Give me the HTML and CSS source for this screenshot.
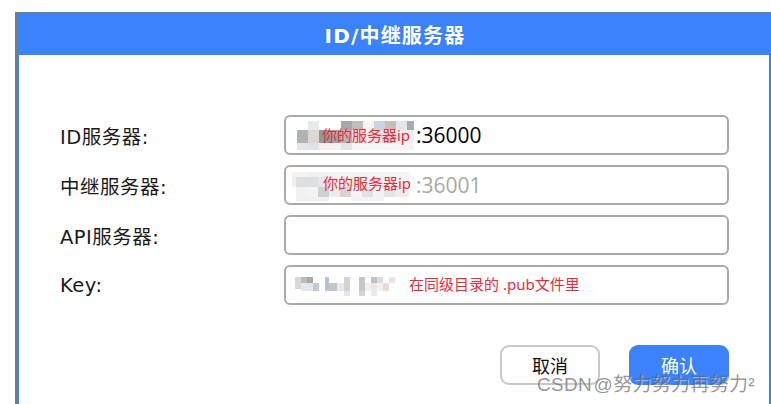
FILE: index.html
```html
<!DOCTYPE html>
<html>
	<head>
		<meta charset="utf-8">
		<title>ID/中继服务器</title>
		<link rel="stylesheet" href="styles.css">
	</head>
	<body>
		<div class="window">
			<div class="dialog">
				<div class="dialogTitle">ID/中继服务器</div>
				<div class="dialogBody">
					<div class="formRow">
						<label class="rowLabel">ID服务器:</label>
						<div class="field">
							<input class="fieldInput" type="text" value=":36000">
							<svg class="mosaic mosaicId" width="128" height="29" viewBox="0 0 128 29">
								<rect x="11" y="0" width="11" height="9" fill="#e8e9ec"/>
								<rect x="44" y="0" width="11" height="9" fill="#a5a7aa"/>
								<rect x="55" y="0" width="11" height="9" fill="#c0bcb8"/>
								<rect x="66" y="0" width="11" height="9" fill="#f5f4f2"/>
								<rect x="77" y="0" width="11" height="9" fill="#ccd3df"/>
								<rect x="88" y="0" width="11" height="9" fill="#c2bfbc"/>
								<rect x="99" y="0" width="11" height="9" fill="#e5e6e8"/>
								<rect x="110" y="0" width="7" height="9" fill="#a9abad"/>
								<rect x="0" y="9" width="11" height="13" fill="#b0b3b4"/>
								<rect x="11" y="9" width="11" height="13" fill="#dcd9d4"/>
								<rect x="22" y="9" width="11" height="13" fill="#959698"/>
								<rect x="33" y="9" width="11" height="13" fill="#a0a0a2"/>
								<rect x="44" y="9" width="11" height="13" fill="#b5b5b8"/>
								<rect x="55" y="9" width="11" height="13" fill="#e4e3e1"/>
								<rect x="66" y="9" width="11" height="13" fill="#f0efed"/>
								<rect x="77" y="9" width="11" height="13" fill="#e0e2e6"/>
								<rect x="88" y="9" width="11" height="13" fill="#dcd8d4"/>
								<rect x="99" y="9" width="18" height="13" fill="#f0f0f0"/>
								<rect x="0" y="22" width="11" height="7" fill="#e4e5e7"/>
								<rect x="11" y="22" width="11" height="7" fill="#dfe2e7"/>
								<rect x="22" y="22" width="22" height="7" fill="#f2f1ef"/>
								<rect x="44" y="22" width="11" height="7" fill="#e4e4e4"/>
								<rect x="55" y="22" width="62" height="7" fill="#f4f4f4"/>
							</svg>
							<span class="note noteId">你的服务器ip</span>
						</div>
					</div>
					<div class="formRow">
						<label class="rowLabel">中继服务器:</label>
						<div class="field">
							<input class="fieldInput" type="text" placeholder=":36001">
							<svg class="mosaic mosaicRelay" width="128" height="30" viewBox="0 0 128 30">
								<rect x="0" y="0" width="15" height="5" fill="#f6f3f1"/>
								<rect x="15" y="0" width="22" height="5" fill="#f0f0f0"/>
								<rect x="37" y="0" width="80" height="5" fill="#f5f5f5"/>
								<rect x="0" y="5" width="4" height="10" fill="#f0f0f0"/>
								<rect x="4" y="5" width="22" height="10" fill="#dedfe0"/>
								<rect x="26" y="5" width="11" height="10" fill="#e6e6e8"/>
								<rect x="37" y="5" width="22" height="10" fill="#f4f2f0"/>
								<rect x="59" y="5" width="11" height="10" fill="#e2e3e6"/>
								<rect x="70" y="5" width="47" height="10" fill="#f6f5f4"/>
								<rect x="4" y="15" width="11" height="10" fill="#f0f1f3"/>
								<rect x="15" y="15" width="11" height="10" fill="#f3f3f3"/>
								<rect x="26" y="15" width="11" height="10" fill="#cfd1d3"/>
								<rect x="37" y="15" width="11" height="10" fill="#ececec"/>
								<rect x="48" y="15" width="11" height="10" fill="#d8d4d0"/>
								<rect x="59" y="15" width="11" height="10" fill="#f5f5f5"/>
								<rect x="70" y="15" width="11" height="10" fill="#dfe2e5"/>
								<rect x="81" y="15" width="11" height="10" fill="#f4f4f4"/>
								<rect x="92" y="15" width="11" height="10" fill="#e2e3e6"/>
								<rect x="103" y="15" width="14" height="10" fill="#efedea"/>
								<rect x="4" y="25" width="33" height="4" fill="#f0f0f2"/>
								<rect x="59" y="25" width="33" height="4" fill="#f2f2f4"/>
							</svg>
							<span class="note noteRelay">你的服务器ip</span>
						</div>
					</div>
					<div class="formRow">
						<label class="rowLabel">API服务器:</label>
						<div class="field">
							<input class="fieldInput" type="text">
						</div>
					</div>
					<div class="formRow">
						<label class="rowLabel">Key:</label>
						<div class="field">
							<input class="fieldInput" type="text">
							<svg class="mosaic mosaicKey" width="100" height="24" viewBox="0 0 100 24">
								<rect x="0" y="2" width="6" height="12" fill="#d8d8da"/>
								<rect x="6" y="2" width="6" height="6" fill="#bcbcbc"/>
								<rect x="12" y="2" width="6" height="6" fill="#a8a8aa"/>
								<rect x="6" y="8" width="12" height="8" fill="#e4e6ec"/>
								<rect x="18" y="8" width="6" height="8" fill="#c4cbd6"/>
								<rect x="30" y="2" width="4" height="14" fill="#b9c2d0"/>
								<rect x="34" y="8" width="8" height="8" fill="#c2c5ca"/>
								<rect x="42" y="8" width="7" height="8" fill="#e2e9f0"/>
								<rect x="49" y="2" width="6" height="14" fill="#d6d2cc"/>
								<rect x="49" y="16" width="6" height="5" fill="#e4e6ec"/>
								<rect x="64" y="2" width="6" height="14" fill="#c6c7cb"/>
								<rect x="64" y="16" width="6" height="5" fill="#d4d5d8"/>
								<rect x="70" y="8" width="6" height="8" fill="#f3eee6"/>
								<rect x="76" y="2" width="6" height="6" fill="#c2c2c2"/>
								<rect x="82" y="2" width="6" height="6" fill="#dcdcdc"/>
								<rect x="76" y="8" width="6" height="13" fill="#e8e9ee"/>
								<rect x="82" y="8" width="6" height="8" fill="#f6f0ea"/>
								<rect x="88" y="8" width="6" height="8" fill="#e6ddd2"/>
								<rect x="94" y="2" width="6" height="6" fill="#e4e4e4"/>
							</svg>
							<span class="note noteKey">在同级目录的 .pub文件里</span>
						</div>
					</div>
					<div class="dialogButtons">
						<button class="btn btnCancel">取消</button>
						<button class="btn btnOk">确认</button>
					</div>
				</div>
			</div>
		</div>
		<div class="watermark">CSDN @努力努力再努力²</div>
	</body>
</html>
```

FILE: styles.css
```css
html, body {
	height: 100%;
}

body {
	display: flex;
	margin: 0;
	padding: 12px 0 0 15px;
	box-sizing: border-box;
	background-color: #fff;
	overflow: hidden;
	font-family: "Open Sans", "Noto Sans CJK SC", sans-serif;
}

.window {
	display: flex;
	flex: 1;
	min-width: 0;
	border-top: 1px solid #7a7a7a;
	border-left: 2px solid #7a7a7a;
}

.dialog {
	flex: 1;
	min-width: 0;
	border-left: 2px solid #3b82fb;
	border-right: 2px solid #3b82fb;
	background-color: #fff;
}

.dialogTitle {
	height: 42px;
	line-height: 46px;
	margin-left: -2px;
	padding-left: 4px;
	background-color: #3b82fb;
	color: #fff;
	font-family: "DejaVu Sans", "Noto Sans CJK SC", sans-serif;
	font-size: 20px;
	font-weight: bold;
	letter-spacing: 1.2px;
	text-align: center;
}

.dialogBody {
	padding: 60px 40px 0 41px;
}

.formRow {
	display: flex;
	align-items: center;
	height: 40px;
	margin-bottom: 10px;
}

.rowLabel {
	width: 224px;
	flex: none;
	font-family: "DejaVu Sans", "Noto Sans CJK SC", sans-serif;
	font-size: 19.5px;
	letter-spacing: 0.5px;
	color: #1a1a1a;
}

.field {
	position: relative;
	flex: 1;
	height: 40px;
}

.fieldInput {
	width: 100%;
	height: 40px;
	box-sizing: border-box;
	padding: 0 0 0 130px;
	border: 2px solid #a9a9ae;
	border-radius: 6px;
	background: transparent;
	font-family: "Open Sans", sans-serif;
	font-size: 21px;
	color: #000;
	outline: none;
}

.fieldInput::placeholder {
	color: #a8a8a8;
	opacity: 1;
}

.mosaic {
	position: absolute;
	display: block;
}

.mosaicId {
	left: 13px;
	top: 6px;
}

.mosaicRelay {
	left: 8px;
	top: 7px;
}

.mosaicKey {
	left: 11px;
	top: 10px;
}

.note {
	position: absolute;
	color: #ee2a3a;
	font-family: "Noto Sans", "Noto Sans CJK SC", sans-serif;
	font-size: 15px;
	line-height: 20px;
	white-space: nowrap;
}

.noteId {
	left: 38px;
	top: 10px;
}

.noteRelay {
	left: 39px;
	top: 8px;
}

.noteKey {
	left: 125px;
	top: 9px;
}

.dialogButtons {
	display: flex;
	justify-content: flex-end;
	gap: 29px;
	margin-top: 40px;
}

.btn {
	width: 100px;
	height: 40px;
	box-sizing: border-box;
	border-radius: 9px;
	font-family: "Open Sans", "Noto Sans CJK SC", sans-serif;
	font-size: 18px;
}

.btnCancel {
	border: 2px solid #c8c8c8;
	background-color: #fff;
	color: #111;
}

.btnOk {
	border: none;
	background-color: #3b82fb;
	color: #fff;
}

.watermark {
	position: absolute;
	left: 537px;
	top: 373px;
	color: rgba(90, 90, 90, 0.65);
	font-family: "Liberation Sans", "Noto Sans CJK SC", sans-serif;
	font-size: 19px;
	letter-spacing: 0.3px;
	word-spacing: -4px;
	line-height: 24px;
	white-space: nowrap;
	text-shadow: 1px 1px 1px rgba(255, 255, 255, 0.5);
}
```
